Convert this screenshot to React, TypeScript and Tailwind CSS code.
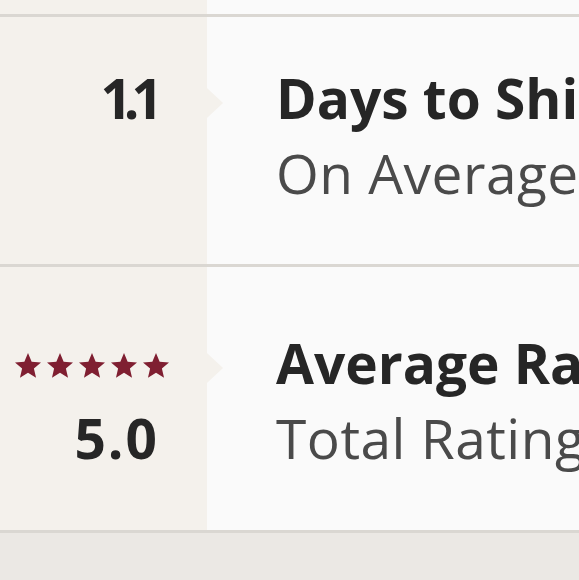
import React from "react";

const font = { fontFamily: "'Open Sans', Lato, sans-serif" };

function Star() {
  return (
    <svg viewBox="0 0 26 25" className="w-[26px] h-[25px]" fill="#7f1f31">
      <polygon points="13,0 16.65,8.65 26,9.45 18.9,15.59 21.04,24.73 13,19.87 4.96,24.73 7.1,15.59 0,9.45 9.35,8.65" />
    </svg>
  );
}

function Arrow({ top }: { top: string }) {
  return (
    <div
      className={`absolute left-full ${top} w-0 h-0 border-y-[15px] border-y-transparent border-l-[16px] border-l-[#f4f1ec]`}
    />
  );
}

interface StatRowProps {
  value: string;
  stars?: boolean;
  title: string;
  subtitle: string;
}

function StatRow({ value, stars, title, subtitle }: StatRowProps) {
  const pad = stars ? "pt-[58px] pb-[55px]" : "pt-[43px] pb-[54px]";
  return (
    <div className="flex border-t-[3px] border-[#dad7d2]">
      <div className={`relative w-[207px] shrink-0 bg-[#f4f1ec] flex flex-col items-end ${pad}`}>
        {stars ? (
          <>
            <div className="h-[75px] flex items-center gap-[6px] pr-[38px] pt-[6px]">
              <Star />
              <Star />
              <Star />
              <Star />
              <Star />
            </div>
            <div className="h-[75px] leading-[75px] text-[55px] font-bold tracking-[2px] text-[#262626] pr-[48px]">
              {value}
            </div>
            <Arrow top="top-[86px]" />
          </>
        ) : (
          <>
            <div className="h-[75px] leading-[75px] text-[55px] font-bold tracking-[-8px] text-[#262626] pr-[52px]">
              {value}
            </div>
            <Arrow top="top-[71px]" />
          </>
        )}
      </div>
      <div className={`flex-1 bg-[#fafafa] pl-[69px] whitespace-nowrap overflow-hidden ${pad}`}>
        <div className="leading-[75px] text-[55px] font-bold text-[#262626]">{title}</div>
        <div className="leading-[75px] text-[55px] tracking-[0.5px] text-[#4a4a4a]">{subtitle}</div>
      </div>
    </div>
  );
}

export default function App() {
  return (
    <div className="w-[579px] h-[580px] overflow-hidden bg-[#ebe8e4]" style={font}>
      <div className="flex h-[14px]">
        <div className="w-[207px] bg-[#f4f1ec]" />
        <div className="flex-1 bg-[#fafafa]" />
      </div>
      <StatRow value="1.1" title="Days to Ship" subtitle="On Average" />
      <StatRow value="5.0" stars title="Average Rating" subtitle="Total Ratings" />
      <div className="border-t-[3px] border-[#dad7d2]" />
    </div>
  );
}
